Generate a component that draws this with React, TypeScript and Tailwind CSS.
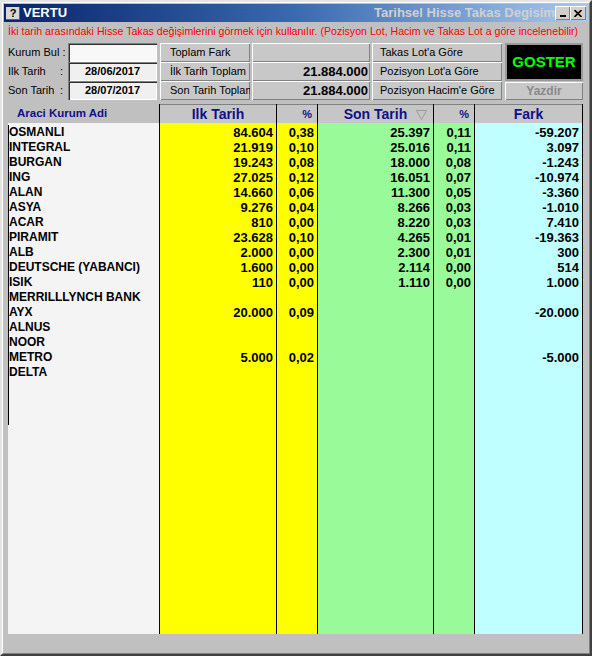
import React from "react";

const rows: string[][] = [
  ["OSMANLI", "84.604", "0,38", "25.397", "0,11", "-59.207"],
  ["INTEGRAL", "21.919", "0,10", "25.016", "0,11", "3.097"],
  ["BURGAN", "19.243", "0,08", "18.000", "0,08", "-1.243"],
  ["ING", "27.025", "0,12", "16.051", "0,07", "-10.974"],
  ["ALAN", "14.660", "0,06", "11.300", "0,05", "-3.360"],
  ["ASYA", "9.276", "0,04", "8.266", "0,03", "-1.010"],
  ["ACAR", "810", "0,00", "8.220", "0,03", "7.410"],
  ["PIRAMIT", "23.628", "0,10", "4.265", "0,01", "-19.363"],
  ["ALB", "2.000", "0,00", "2.300", "0,01", "300"],
  ["DEUTSCHE (YABANCI)", "1.600", "0,00", "2.114", "0,00", "514"],
  ["ISIK", "110", "0,00", "1.110", "0,00", "1.000"],
  ["MERRILLLYNCH BANK", "", "", "", "", ""],
  ["AYX", "20.000", "0,09", "", "", "-20.000"],
  ["ALNUS", "", "", "", "", ""],
  ["NOOR", "", "", "", "", ""],
  ["METRO", "5.000", "0,02", "", "", "-5.000"],
  ["DELTA", "", "", "", "", ""],
];

const raised = "shadow-[inset_1px_1px_0_#ffffff,inset_-1px_-1px_0_#808080]";
const sunken = "shadow-[inset_1px_1px_0_#808080,inset_2px_2px_0_#303030,inset_-1px_-1px_0_#ffffff]";

function NumColumn({ idx, width, bg, header, small, sort, last }: { idx: number; width: string; bg: string; header: string; small?: boolean; sort?: boolean; last?: boolean }) {
  return (
    <div className={`flex flex-col border-l border-black ${width} ${last ? "border-r" : ""}`}>
      <div className={`h-[19px] shrink-0 border-t border-[#808080] bg-[#c6c6c6] flex items-center ${small ? "justify-end pr-[5px]" : "justify-center"} relative`}>
        <span className={`font-bold text-[#10108a] ${small ? "text-[11px]" : "text-[14px]"}`}>{header}</span>
        {sort && (
          <svg className="absolute right-[6px] top-[5px]" width="11" height="10" viewBox="0 0 11 10">
            <path d="M0.5 0.5 H10.5 L5.5 9.5 Z" fill="none" stroke="#9a9a9a" strokeWidth="1" />
          </svg>
        )}
      </div>
      <div className={`flex-1 pt-[2px] ${bg}`}>
        {rows.map((r, i) => (
          <div key={i} className="h-[15px] leading-[15px] text-right pr-[3px] text-[13px] font-bold text-black">
            {r[idx]}
          </div>
        ))}
      </div>
    </div>
  );
}

export default function App() {
  return (
    <div className="w-[592px] h-[656px] bg-[#dcdcdc] border-t-2 border-l-2 border-b-2 border-r-2 border-t-[#e4e4e4] border-l-[#e4e4e4] border-b-[#404040] border-r-[#404040] font-['Liberation_Sans',Arial,sans-serif]">
      <div className="w-full h-full bg-[#c0c0c0] border border-t-white border-l-white border-b-[#808080] border-r-[#808080] p-[1px] flex flex-col">
        {/* title bar */}
        <div className="h-[18px] shrink-0 flex items-center bg-gradient-to-r from-[#0a246a] via-[#3a6ab0] to-[#a6caf0]">
          <div className="ml-[2px] w-[14px] h-[13px] bg-[#d8d8d8] flex items-center justify-center text-[11px] font-bold text-black leading-none shadow-[inset_-1px_-1px_0_#606060]">?</div>
          <span className="ml-[3px] text-white font-bold text-[13px]">VERTU</span>
          <div className="flex-1" />
          <div className="w-[181px] overflow-hidden whitespace-nowrap text-[13px] font-bold text-[#d4d0c8]">Tarihsel Hisse Takas Degisimleri</div>
          <div className="flex mr-[2px]">
            <div className={`w-[15px] h-[14px] bg-[#d4d0c8] ${raised} flex items-end justify-center pb-[3px]`}>
              <div className="w-[6px] h-[2px] bg-black" />
            </div>
            <div className={`w-[16px] h-[14px] bg-[#d4d0c8] ${raised} flex items-center justify-center`}>
              <svg width="8" height="7" viewBox="0 0 8 7">
                <path d="M0.5 0 L7.5 7 M7.5 0 L0.5 7" stroke="black" strokeWidth="1.6" />
              </svg>
            </div>
          </div>
        </div>

        {/* description */}
        <div className="mt-[2px] h-[14px] leading-[14px] pl-[4px] text-[10.6px] text-[#ff0000] whitespace-nowrap">
          İki tarih arasındaki Hisse Takas değişimlerini görmek için kullanılır. (Pozisyon Lot, Hacim ve Takas Lot a göre incelenebilir)
        </div>

        {/* controls */}
        <div className="mt-[5px] flex pl-[4px] text-[11px] text-black">
          <div className="w-[60px] flex flex-col">
            <div className="h-[19px] flex items-center">Kurum Bul :</div>
            <div className="h-[19px] flex items-center justify-between pr-[5px]"><span>Ilk Tarih</span><span>:</span></div>
            <div className="h-[19px] flex items-center justify-between pr-[5px]"><span>Son Tarih</span><span>:</span></div>
          </div>
          <div className="w-[89px] flex flex-col">
            <div className={`h-[19px] bg-[#f8f8f8] ${sunken}`} />
            <div className={`h-[19px] bg-[#f0f0f0] ${sunken} flex items-center justify-center font-bold`}>28/06/2017</div>
            <div className={`h-[19px] bg-[#f0f0f0] ${sunken} flex items-center justify-center font-bold`}>28/07/2017</div>
          </div>
          <div className="ml-[3px] w-[90px] flex flex-col">
            {["Toplam Fark", "İlk Tarih Toplam", "Son Tarih Toplam"].map((t) => (
              <div key={t} className={`h-[19px] bg-[#c8c8c8] ${raised} flex items-center pl-[10px] whitespace-nowrap overflow-hidden`}>{t}</div>
            ))}
          </div>
          <div className="ml-[2px] w-[118px] flex flex-col">
            {["", "21.884.000", "21.884.000"].map((t, i) => (
              <div key={i} className={`h-[19px] bg-[#c8c8c8] ${raised} flex items-center justify-end pr-[2px] text-[13px] font-bold`}>{t}</div>
            ))}
          </div>
          <div className="ml-[2px] w-[130px] flex flex-col">
            {["Takas Lot'a Göre", "Pozisyon Lot'a Göre", "Pozisyon Hacim'e Göre"].map((t) => (
              <div key={t} className={`h-[19px] bg-[#c8c8c8] ${raised} flex items-center pl-[8px] whitespace-nowrap`}>{t}</div>
            ))}
          </div>
          <div className="ml-[3px] w-[78px] flex flex-col gap-[1px]">
            <div className="h-[38px] bg-black border-2 border-[#9a9a9a] flex items-center justify-center text-[15px] font-bold text-[#00ff00]">GOSTER</div>
            <div className={`h-[18px] bg-[#c8c8c8] ${raised} flex items-center justify-center text-[12px] font-bold text-[#8a8a8a]`}>Yazdir</div>
          </div>
        </div>

        {/* grid */}
        <div className="mt-[4px] flex-1 flex pl-[4px]">
          <div className="w-[151px] flex flex-col">
            <div className="h-[19px] shrink-0 flex items-center pl-[9px] text-[11.5px] font-bold text-[#10108a]">Araci Kurum Adi</div>
            <div className="flex-1 pt-[2px] bg-[#f4f4f4]">
              {Array.from({ length: 20 }).map((_, i) => (
                <div key={i} className="h-[15px] leading-[15px] border-l border-black text-[12px] font-bold text-black whitespace-nowrap">
                  {rows[i] ? rows[i][0] : ""}
                </div>
              ))}
            </div>
          </div>
          <NumColumn idx={1} width="w-[117px]" bg="bg-[#ffff00]" header="Ilk Tarih" />
          <NumColumn idx={2} width="w-[41px]" bg="bg-[#ffff00]" header="%" small />
          <NumColumn idx={3} width="w-[116px]" bg="bg-[#98fa98]" header="Son Tarih" sort />
          <NumColumn idx={4} width="w-[41px]" bg="bg-[#98fa98]" header="%" small />
          <NumColumn idx={5} width="w-[109px]" bg="bg-[#c0ffff]" header="Fark" last />
        </div>
        <div className="h-[18px] shrink-0" />
      </div>
    </div>
  );
}
